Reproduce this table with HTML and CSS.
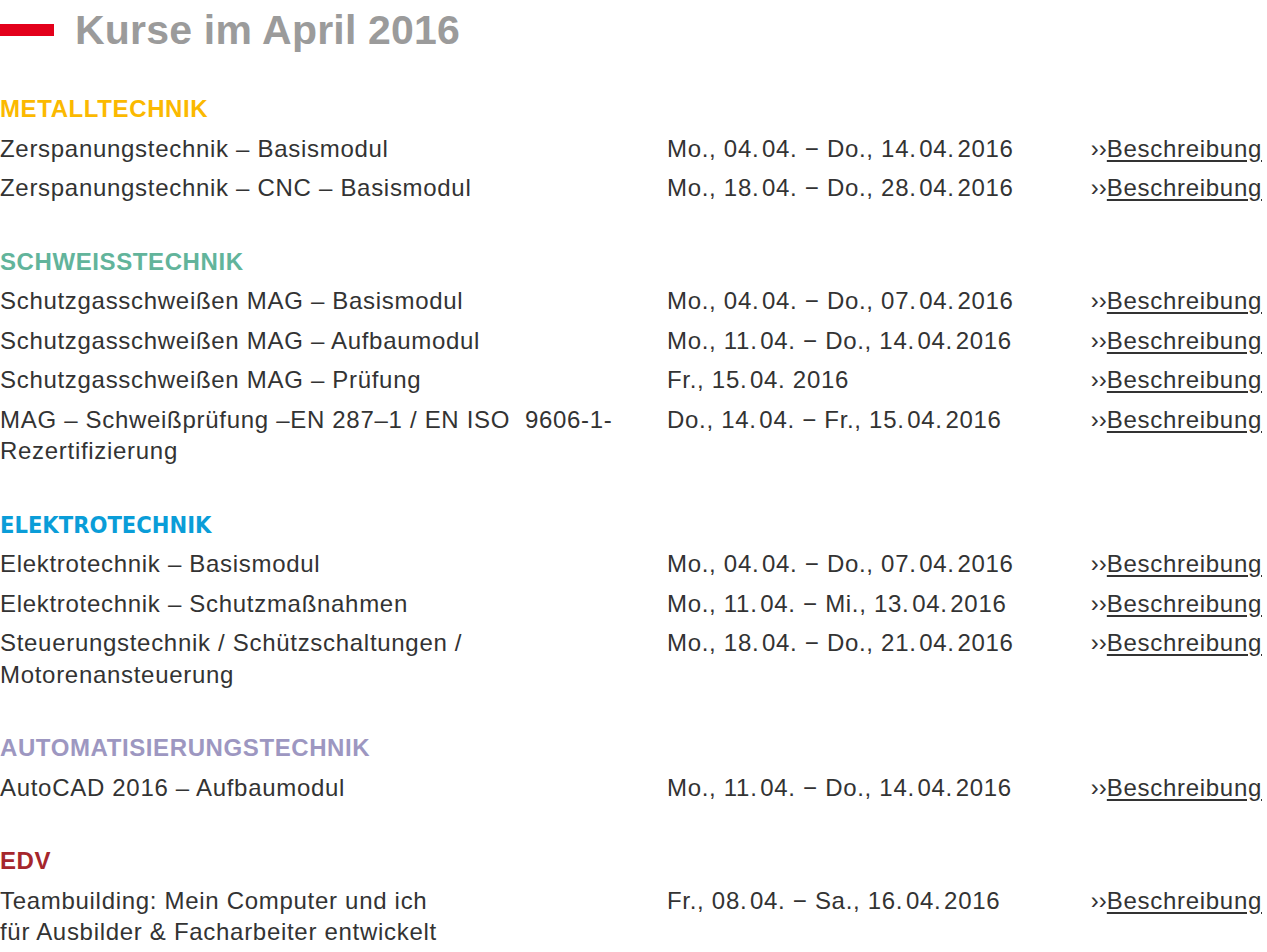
FILE: index.html
```html
<!DOCTYPE html>
<html lang="de">
<head>
<meta charset="utf-8">
<title>Kurse im April 2016</title>
<link rel="stylesheet" href="styles.css">
</head>
<body>
<div class="page">
  <h1 class="title"><span class="title-bar"></span>Kurse im April 2016</h1>

  <section class="section">
    <h2 class="cat cat-metall">METALLTECHNIK</h2>
    <div class="row"><div class="name">Zerspanungstechnik – Basismodul</div><div class="date">Mo., 04.&#8202;04. − Do., 14.&#8202;04.&#8202;2016</div><div class="more">››<a href="#">Beschreibung</a></div></div>
    <div class="row"><div class="name">Zerspanungstechnik – CNC – Basismodul</div><div class="date">Mo., 18.&#8202;04. − Do., 28.&#8202;04.&#8202;2016</div><div class="more">››<a href="#">Beschreibung</a></div></div>
  </section>

  <section class="section">
    <h2 class="cat cat-schweiss">SCHWEISSTECHNIK</h2>
    <div class="row"><div class="name">Schutzgasschweißen MAG – Basismodul</div><div class="date">Mo., 04.&#8202;04. − Do., 07.&#8202;04.&#8202;2016</div><div class="more">››<a href="#">Beschreibung</a></div></div>
    <div class="row"><div class="name">Schutzgasschweißen MAG – Aufbaumodul</div><div class="date">Mo., 11.&#8202;04. − Do., 14.&#8202;04.&#8202;2016</div><div class="more">››<a href="#">Beschreibung</a></div></div>
    <div class="row"><div class="name">Schutzgasschweißen MAG – Prüfung</div><div class="date">Fr., 15.&#8202;04. 2016</div><div class="more">››<a href="#">Beschreibung</a></div></div>
    <div class="row"><div class="name">MAG – Schweißprüfung –EN 287–1 / EN ISO &nbsp;9606-1-<br>Rezertifizierung</div><div class="date">Do., 14.&#8202;04. − Fr., 15.&#8202;04.&#8202;2016</div><div class="more">››<a href="#">Beschreibung</a></div></div>
  </section>

  <section class="section">
    <h2 class="cat cat-elektro">ELEKTROTECHNIK</h2>
    <div class="row"><div class="name">Elektrotechnik – Basismodul</div><div class="date">Mo., 04.&#8202;04. − Do., 07.&#8202;04.&#8202;2016</div><div class="more">››<a href="#">Beschreibung</a></div></div>
    <div class="row"><div class="name">Elektrotechnik – Schutzmaßnahmen</div><div class="date">Mo., 11.&#8202;04. − Mi., 13.&#8202;04.&#8202;2016</div><div class="more">››<a href="#">Beschreibung</a></div></div>
    <div class="row"><div class="name">Steuerungstechnik / Schützschaltungen /<br>Motorenansteuerung</div><div class="date">Mo., 18.&#8202;04. − Do., 21.&#8202;04.&#8202;2016</div><div class="more">››<a href="#">Beschreibung</a></div></div>
  </section>

  <section class="section">
    <h2 class="cat cat-auto">AUTOMATISIERUNGSTECHNIK</h2>
    <div class="row"><div class="name">AutoCAD 2016 – Aufbaumodul</div><div class="date">Mo., 11.&#8202;04. − Do., 14.&#8202;04.&#8202;2016</div><div class="more">››<a href="#">Beschreibung</a></div></div>
  </section>

  <section class="section">
    <h2 class="cat cat-edv">EDV</h2>
    <div class="row"><div class="name">Teambuilding: Mein Computer und ich<br>für Ausbilder &amp; Facharbeiter entwickelt</div><div class="date">Fr., 08.&#8202;04. − Sa., 16.&#8202;04.&#8202;2016</div><div class="more">››<a href="#">Beschreibung</a></div></div>
  </section>
</div>
</body>
</html>
```

FILE: styles.css
```css
* { box-sizing: border-box; }

html, body {
  margin: 0;
  padding: 0;
  background: #ffffff;
}

body {
  font-family: "Liberation Sans", Arial, sans-serif;
  color: #333333;
}

.page {
  width: 1267px;
  display: flex;
  flex-direction: column;
}

.title {
  display: flex;
  align-items: center;
  gap: 21px;
  margin: 0;
  height: 60px;
  font-size: 41px;
  font-weight: bold;
  color: #9b9b9b;
  letter-spacing: 0.2px;
}

.title-bar {
  display: block;
  width: 54px;
  height: 12px;
  background: #e3001b;
}

.section {
  margin-top: 34px;
}

.section:first-of-type {
  margin-top: 29px;
}

.cat {
  margin: 0;
  font-size: 24px;
  font-weight: bold;
  line-height: 31.5px;
  padding: 4px 0;
  letter-spacing: 0.6px;
}

.cat-metall { color: #fbb900; }
.cat-schweiss { color: #62b49b; }
.cat-auto { color: #9d97c1; }
.cat-edv { color: #a6262c; }

.cat-elektro {
  color: #0a9dd8;
  font-family: "DejaVu Sans Condensed", "DejaVu Sans", sans-serif;
  font-stretch: condensed;
  font-size: 23.5px;
  letter-spacing: 0;
  padding: 5px 0 3px;
}

.row {
  display: grid;
  grid-template-columns: 667px 1fr auto;
  font-size: 24px;
  line-height: 31.5px;
  padding: 4px 5px 4px 0;
  letter-spacing: 0.7px;
}

.name {
  padding-right: 20px;
}

.more {
  letter-spacing: 0;
}

.more a {
  color: #333333;
  text-decoration: underline;
  text-underline-offset: 3px;
  letter-spacing: 0.7px;
}
```
